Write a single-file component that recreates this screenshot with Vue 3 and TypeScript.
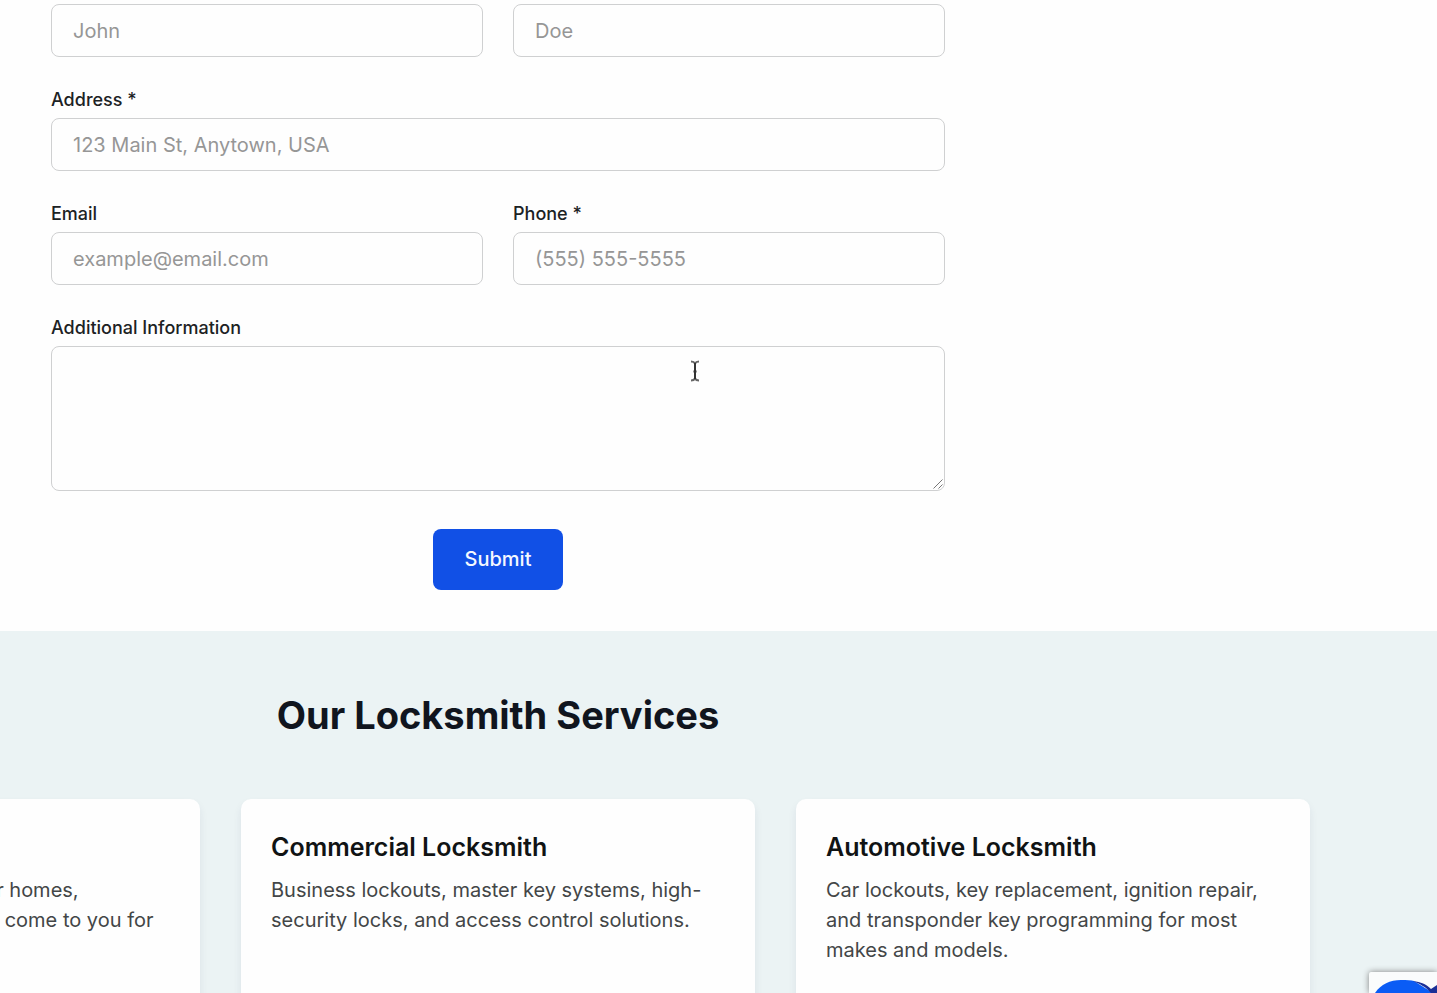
<script setup lang="ts">
interface Service {
  title: string
  text: string
}

const services: Service[] = [
  {
    title: 'Residential Locksmith',
    text: 'Lockouts, rekeys, and keys for homes, apartments, and cottages. We come to you for fast service.',
  },
  {
    title: 'Commercial Locksmith',
    text: 'Business lockouts, master key systems, high-security locks, and access control solutions.',
  },
  {
    title: 'Automotive Locksmith',
    text: 'Car lockouts, key replacement, ignition repair, and transponder key programming for most makes and models.',
  },
]
</script>

<template>
  <div class="viewport">
    <div class="page">
      <form class="form" @submit.prevent>
        <div class="row">
          <div class="field">
            <input type="text" placeholder="John" aria-label="First Name" />
          </div>
          <div class="field">
            <input type="text" placeholder="Doe" aria-label="Last Name" />
          </div>
        </div>
        <div class="field">
          <label for="address">Address *</label>
          <input id="address" type="text" placeholder="123 Main St, Anytown, USA" />
        </div>
        <div class="row">
          <div class="field">
            <label for="email">Email</label>
            <input id="email" type="email" placeholder="example@email.com" />
          </div>
          <div class="field">
            <label for="phone">Phone *</label>
            <input id="phone" type="tel" placeholder="(555) 555-5555" />
          </div>
        </div>
        <div class="field">
          <label for="info">Additional Information</label>
          <div class="area">
            <textarea id="info"></textarea>
            <svg class="grip" viewBox="0 0 12 12" aria-hidden="true">
              <path d="M1.5 10.5 10.5 1.5M6.5 10.5 10.5 6.5" />
            </svg>
          </div>
        </div>
        <button class="submit" type="submit">Submit</button>
      </form>

      <section class="services">
        <h2>Our Locksmith Services</h2>
        <div class="cards">
          <article v-for="service in services" :key="service.title" class="card">
            <h3>{{ service.title }}</h3>
            <p>{{ service.text }}</p>
          </article>
        </div>
      </section>
    </div>

    <svg class="cursor" viewBox="0 0 10 22" aria-hidden="true">
      <path class="serifs" d="M1 1.5Q4 1.5 5 3.5Q6 1.5 9 1.5M1 20.5Q4 20.5 5 18.5Q6 20.5 9 20.5" />
      <path class="stem" d="M5 3V19M3.500 11.500H6.500" />
    </svg>

    <div class="badge">
      <svg viewBox="0 0 68 21" aria-hidden="true">
        <path class="light" d="M6 21C12 12 21 8 32 8C38 8 42 8 45 9L64 21Z" />
        <path class="dark" d="M44 9C52 10 57 12 62 17L68 13V21H62C57 15 51 12 44 9Z" />
      </svg>
    </div>
  </div>
</template>

<style>
body {
  margin: 0;
}
</style>

<style scoped>
.viewport {
  position: relative;
  height: 100vh;
  overflow: hidden;
  background: #fefefe;
  color: #1c2224;
  font-family: Inter, "Liberation Sans", sans-serif;
  font-size: 20px;
}

.viewport *,
.viewport *::before {
  box-sizing: border-box;
}

.page {
  display: flex;
  flex-direction: column;
  min-height: 100%;
  margin-left: -441px;
}

.form {
  display: flex;
  flex-direction: column;
  gap: 31px;
  width: 100%;
  max-width: 894px;
  margin: 0 auto;
  padding: 4px 0 41px;
}

.row {
  display: grid;
  grid-template-columns: 1fr 1fr;
  gap: 30px;
}

.field {
  display: flex;
  flex-direction: column;
  gap: 6px;
}

label {
  font-size: 18px;
  font-weight: 500;
  line-height: 24px;
}

input,
textarea {
  display: block;
  width: 100%;
  border: 1px solid #cfd0d1;
  border-radius: 8px;
  padding: 0 21px;
  background: #fefefe;
  color: inherit;
  font: inherit;
}

input {
  height: 53px;
}

textarea {
  height: 145px;
  padding: 10px 21px;
  resize: none;
}

input::placeholder {
  color: #969696;
  opacity: 1;
}

.area {
  position: relative;
}

.grip {
  position: absolute;
  right: 1px;
  bottom: 1px;
  width: 12px;
  height: 12px;
  fill: none;
  stroke: #777;
}

.submit {
  align-self: center;
  margin-top: 7px;
  padding: 15px 32px;
  border: 0;
  border-radius: 8px;
  background: #1150e6;
  color: #f4f8ff;
  font: inherit;
  font-weight: 500;
  line-height: 31px;
}

.services {
  flex: 1;
  padding: 61px 0;
  background: #ebf3f4;
}

h2 {
  margin: 0 0 61px;
  color: #10151e;
  font-size: 38px;
  font-weight: 700;
  line-height: 46px;
  text-align: center;
}

.cards {
  display: grid;
  grid-template-columns: repeat(3, 1fr);
  gap: 41px;
  max-width: 1624px;
  margin: 0 auto;
}

.card {
  min-height: 230px;
  padding: 30px;
  border-radius: 10px;
  background: #fefefe;
  box-shadow: 0 5px 8px rgba(40, 40, 90, 0.08);
}

h3 {
  margin: 0 0 10px;
  color: #101314;
  font-size: 25px;
  font-weight: 600;
  line-height: 36px;
}

p {
  margin: 0;
  color: #434647;
  line-height: 30px;
}

.cursor {
  position: absolute;
  top: 360px;
  left: 690px;
  width: 10px;
  height: 22px;
  fill: none;
  stroke: #333;
}

.serifs {
  stroke: #666;
  stroke-width: 2;
}

.stem {
  stroke-width: 2;
}

.badge {
  position: absolute;
  right: 0;
  bottom: 0;
  width: 68px;
  height: 21px;
  border-radius: 2px 0 0 0;
  background: #fafcfc;
  box-shadow: 0 0 6px #808080;
}

.badge svg {
  display: block;
  width: 68px;
  height: 21px;
}

.light {
  fill: #0a5cf5;
}

.dark {
  fill: #1a2f96;
}
</style>
